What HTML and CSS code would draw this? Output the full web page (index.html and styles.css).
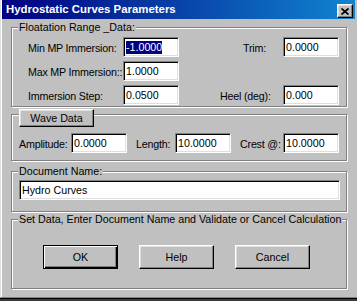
FILE: index.html
```html
<!DOCTYPE html>
<html>
<head>
<meta charset="utf-8">
<link rel="stylesheet" href="styles.css">
</head>
<body>
<div class="window">
  <div class="frame">
    <div class="titlebar">
      <span class="title">Hydrostatic Curves Parameters</span>
      <span class="close"><svg width="8" height="7" viewBox="0 0 8 7"><path d="M0.5 0.5L7.5 6.5M7.5 0.5L0.5 6.5" stroke="#000" stroke-width="1.7"/></svg></span>
    </div>
    <div class="body">
      <div class="group g1">
        <span class="legend">Floatation Range _Data:</span>
        <div class="label">Min MP Immersion:</div>
        <div class="field"><span class="sel">-1.0000</span></div>
        <div class="label at-trim">Trim:</div>
        <div class="field">0.0000</div>

        <div class="label">Max MP Immersion::</div>
        <div class="field">1.0000</div>
        <div></div>
        <div></div>

        <div class="label">Immersion Step:</div>
        <div class="field">0.0500</div>
        <div class="label at-heel">Heel (deg):</div>
        <div class="field">0.000</div>
      </div>

      <div class="group g2">
        <div class="btn wave">Wave Data</div>
        <div class="label w-amp">Amplitude:</div>
        <div class="field">0.0000</div>
        <div class="label w-len">Length:</div>
        <div class="field">10.0000</div>
        <div class="label w-crest">Crest @:</div>
        <div class="field">10.0000</div>
      </div>

      <div class="group g3">
        <span class="legend">Document Name:</span>
        <div class="field wide">Hydro Curves</div>
      </div>

      <div class="group g4">
        <span class="legend">Set Data, Enter Document Name and Validate or Cancel Calculation</span>
        <div class="btn big default">OK</div>
        <div class="btn big">Help</div>
        <div class="btn big">Cancel</div>
      </div>
    </div>
  </div>
  <div class="edge-black"></div>
  <div class="desk"></div>
</div>
</body>
</html>
```

FILE: styles.css
```css
html, body {
  margin: 0;
  padding: 0;
  background: #3a3a3a;
}

.window {
  width: 357px;
  height: 301px;
  display: flex;
  flex-direction: column;
  overflow: hidden;
  background: #c0c0c0;
  font-family: "Liberation Sans", Arial, sans-serif;
  font-size: 10.7px;
  color: #000;
}

.frame {
  flex: 1;
  display: flex;
  flex-direction: column;
  border-left: 1px solid #dfdfdf;
  border-bottom: 1px solid #808080;
  padding-left: 1px;
  box-shadow: inset 1px 0 0 #fff;
}

.titlebar {
  width: 353px;
  height: 19px;
  flex: none;
  display: flex;
  align-items: flex-start;
  background: linear-gradient(to right, #000080, #1084d0);
}

.title {
  flex: 1;
  padding-left: 4px;
  line-height: 19px;
  font-weight: bold;
  font-size: 11.4px;
  color: #fff;
  white-space: nowrap;
}

.close {
  box-sizing: border-box;
  width: 16px;
  height: 14px;
  margin-top: 4px;
  margin-right: 2px;
  display: flex;
  align-items: center;
  justify-content: center;
  background: #c0c0c0;
  border-style: solid;
  border-width: 1px;
  border-color: #fff #000 #000 #fff;
  box-shadow: inset -1px -1px 0 #808080, inset 1px 1px 0 #dfdfdf;
}

.close svg {
  display: block;
  margin-left: -1px;
}

.body {
  flex: 1;
  padding: 8px 0 0 9px;
}

.group {
  position: relative;
  box-sizing: border-box;
  width: 336px;
  border: 1px solid #808080;
  box-shadow: inset 1px 1px 0 #fff, 1px 1px 0 #fff;
}

.legend {
  position: absolute;
  top: -7px;
  left: 6px;
  padding: 0 1px;
  line-height: 13px;
  background: #c0c0c0;
  white-space: nowrap;
}

.label {
  white-space: nowrap;
  line-height: 20px;
  padding-top: 1px;
}

.g1 .label,
.g2 .label {
  letter-spacing: -0.2px;
}

.field {
  box-sizing: border-box;
  height: 20px;
  width: 56px;
  background: #fff;
  border-style: solid;
  border-width: 1px;
  border-color: #808080 #fff #fff #808080;
  box-shadow: inset 1px 1px 0 #000, inset -1px -1px 0 #dfdfdf;
  padding-left: 2px;
  line-height: 18px;
  white-space: nowrap;
  overflow: hidden;
}

.sel {
  display: inline-block;
  line-height: 13px;
  background: #000080;
  color: #fff;
}

.g1 {
  height: 80px;
  display: grid;
  grid-template-columns: 95px 56px 1fr 56px;
  grid-auto-rows: 20px;
  row-gap: 4px;
  padding: 9px 7px 0 16px;
}

.at-trim { margin-left: 64px; }
.at-heel { margin-left: 41px; }

.g2 {
  height: 47px;
  margin-top: 7px;
  display: flex;
  align-items: flex-start;
  padding: 18px 0 0 7px;
}

.w-amp { width: 52px; }
.w-len { width: 39px; margin-left: 9px; }
.w-crest { width: 43px; margin-left: 9px; }

.g3 {
  height: 41px;
  margin-top: 10px;
  padding: 8px 0 0 7px;
}

.field.wide { width: 321px; }

.g4 {
  height: 70px;
  margin-top: 7px;
  display: flex;
  align-items: flex-start;
  gap: 21px;
  padding: 25px 0 0 31px;
}

.btn {
  box-sizing: border-box;
  display: flex;
  align-items: center;
  justify-content: center;
  background: #c0c0c0;
  border-style: solid;
  border-width: 1px;
  border-color: #fff #000 #000 #fff;
  box-shadow: inset -1px -1px 0 #808080, inset 1px 1px 0 #dfdfdf;
  white-space: nowrap;
}

.btn.wave {
  position: absolute;
  top: -6px;
  left: 7px;
  width: 75px;
  height: 18px;
}

.btn.big {
  width: 75px;
  height: 24px;
}

.btn.default {
  border-color: #000;
  box-shadow: inset 1px 1px 0 #fff, inset -1px -1px 0 #000, inset -2px -2px 0 #808080;
}

.edge-black {
  height: 1px;
  flex: none;
  background: #000;
}

.desk {
  height: 2px;
  flex: none;
  background: #3a3a3a;
}
```
